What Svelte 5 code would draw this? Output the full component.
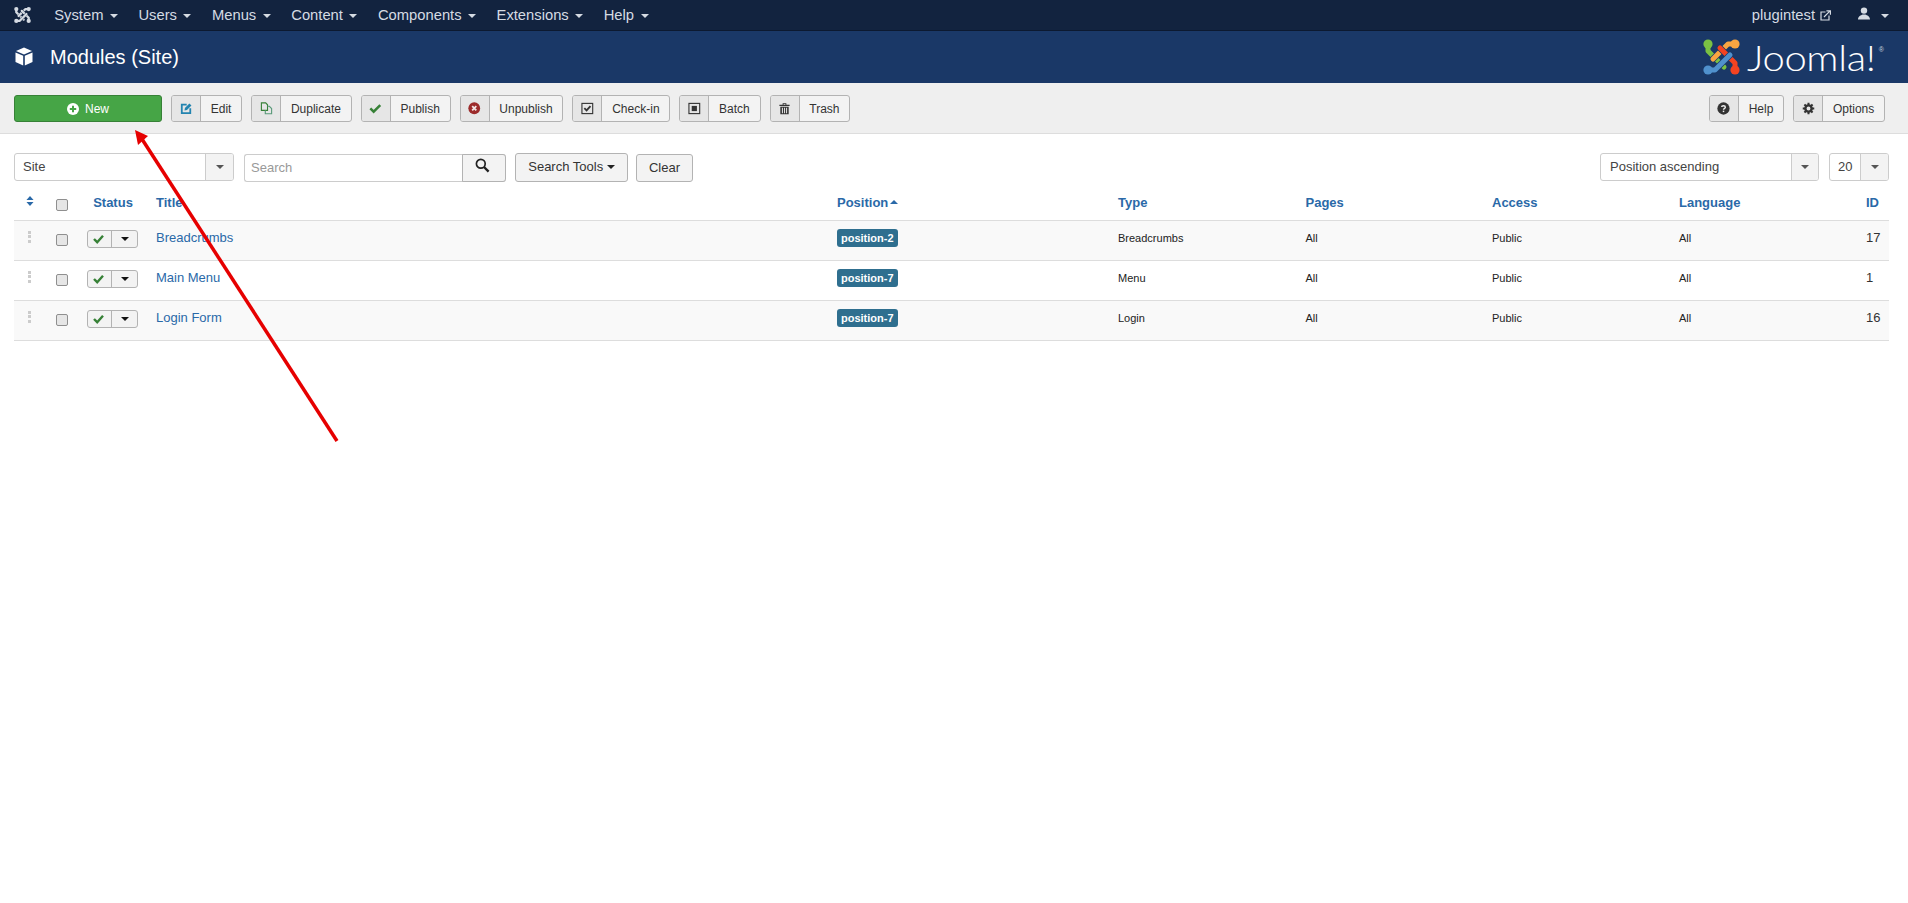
<script lang="ts">
  const menu = ["System", "Users", "Menus", "Content", "Components", "Extensions", "Help"];

  const rows = [
    { title: "Breadcrumbs", position: "position-2", type: "Breadcrumbs", id: 17 },
    { title: "Main Menu", position: "position-7", type: "Menu", id: 1 },
    { title: "Login Form", position: "position-7", type: "Login", id: 16 },
  ];

  const columns = ["Type", "Pages", "Access", "Language"];
</script>

{#snippet mark(green: string, orange: string, red: string, blue: string, gap: string)}
  <g fill="none" stroke-linejoin="round" stroke-linecap="round">
    <path d="M5 5V12L21 28" stroke={gap} stroke-width="6.4" />
    <path d="M5 5V12L21 28" stroke={green} stroke-width="5" />
    <path d="M32 5H25L10 20" stroke={gap} stroke-width="6.4" />
    <path d="M32 5H25L10 20" stroke={orange} stroke-width="5" />
    <path d="M32 31V24L17 9" stroke={gap} stroke-width="6.4" />
    <path d="M32 31V24L17 9" stroke={red} stroke-width="5" />
    <path d="M5 31H12L27 16" stroke={gap} stroke-width="6.4" />
    <path d="M5 31H12L27 16" stroke={blue} stroke-width="5" />
  </g>
  <circle cx="5" cy="5" r="4.6" fill={green} />
  <circle cx="32" cy="5" r="4.6" fill={orange} />
  <circle cx="32" cy="31" r="4.6" fill={red} />
  <circle cx="5" cy="31" r="4.6" fill={blue} />
{/snippet}

{#snippet toolButton(label: string, icon: import("svelte").Snippet)}
  <button type="button" class="tool">
    <span class="tool__icon">{@render icon()}</span>
    <span class="tool__label">{label}</span>
  </button>
{/snippet}

{#snippet iconEdit()}
  <svg width="12.5" height="12.5" viewBox="0 0 14 14">
    <path d="M7.5 3H2v9.5h9.5V7" fill="none" stroke="#2384b0" stroke-width="2" />
    <path d="M5.5 6.7 10.5 1.6 12.8 3.8 7.8 8.9 5 9.5Z" fill="#2384b0" />
  </svg>
{/snippet}
{#snippet iconCopy()}
  <svg width="13" height="13" viewBox="0 0 14 14" fill="none" stroke-width="1.2">
    <path d="M1.5 1h4.6l2 2v6H1.5Z" stroke="#378137" />
    <path d="M8.1 4.6h2l2.4 2.4v5.6H5.7V9" stroke="#5a9a7a" />
  </svg>
{/snippet}
{#snippet iconCheck()}
  <svg width="12.5" height="12.5" viewBox="0 0 14 14">
    <path d="M1.5 7.2 5.2 10.8 12.6 3.4" fill="none" stroke="#378137" stroke-width="2.8" />
  </svg>
{/snippet}
{#snippet iconCross()}
  <svg width="12.5" height="12.5" viewBox="0 0 14 14">
    <circle cx="7" cy="7" r="6.6" fill="#9c2b2b" />
    <path d="M4.7 4.7 9.3 9.3M9.3 4.7 4.7 9.3" stroke="#f3e6e6" stroke-width="2" />
  </svg>
{/snippet}
{#snippet iconCheckin()}
  <svg width="13" height="13" viewBox="0 0 14 14">
    <rect x="1" y="1.5" width="11.6" height="11" fill="none" stroke="#333" stroke-width="1.2" />
    <path d="M3.6 6.6 6 9 10.2 4.4" fill="none" stroke="#333" stroke-width="2" />
  </svg>
{/snippet}
{#snippet iconBatch()}
  <svg width="13" height="13" viewBox="0 0 14 14">
    <rect x="1" y="1.5" width="11.6" height="11" fill="none" stroke="#333" stroke-width="1.2" />
    <rect x="4" y="4.2" width="5.6" height="5.6" fill="#333" />
  </svg>
{/snippet}
{#snippet iconTrash()}
  <svg width="13" height="13" viewBox="0 0 14 14">
    <path d="M1.5 3h11v1.4h-11ZM5 3V1.4h4V3H8V2.2H6V3Z" fill="#333" />
    <path d="M2.5 5h9v8.2h-9ZM4.2 6.2v5.8h1.1V6.2ZM6.5 6.2v5.8h1.1V6.2ZM8.7 6.2v5.8h1.1V6.2Z" fill="#333" fill-rule="evenodd" />
  </svg>
{/snippet}
{#snippet iconHelp()}
  <svg width="13" height="13" viewBox="0 0 14 14">
    <circle cx="7" cy="7" r="6.6" fill="#333" />
    <path d="M5 5.5C5 3.6 9 3.5 9 5.6 9 7 7 6.8 7 8.4" fill="none" stroke="#eee" stroke-width="1.5" />
    <rect x="6.2" y="9.3" width="1.6" height="1.6" fill="#eee" />
  </svg>
{/snippet}
{#snippet iconGear()}
  <svg width="13" height="13" viewBox="0 0 14 14">
    <circle cx="7" cy="7" r="3.4" fill="none" stroke="#333" stroke-width="2.6" />
    <path d="M7 .8V13.2M.8 7H13.2M2.6 2.6l8.8 8.8M11.4 2.6l-8.8 8.8" stroke="#333" stroke-width="2.2" stroke-dasharray="2.4 7.6" />
  </svg>
{/snippet}

<div class="page">
  <nav class="topbar">
    <svg class="topbar__logo" width="17" height="18" viewBox="0 0 37 36">
      {@render mark("#d5dbe3", "#d5dbe3", "#d5dbe3", "#d5dbe3", "#12233f")}
    </svg>
    <ul class="topbar__menu">
      {#each menu as item}
        <li class="topbar__item">{item}<span class="caret"></span></li>
      {/each}
    </ul>
    <div class="topbar__right">
      <span class="topbar__site">plugintest</span>
      <svg class="topbar__ext" width="11" height="11" viewBox="0 0 11 11" fill="none" stroke="#d5dbe3" stroke-width="1.2">
        <path d="M5.5 2H1v8h8V5.5" />
        <path d="M4 7 9.6 1.4M6.4 .8h4v4" />
      </svg>
      <svg class="topbar__user" width="12" height="13" viewBox="0 0 12 13" fill="#d5dbe3">
        <circle cx="6" cy="3.6" r="3.2" />
        <path d="M0 12.5C0 9 3 8.2 4.6 7.4h2.8C9 8.2 12 9 12 12.5Z" />
      </svg>
      <span class="caret caret--user"></span>
    </div>
  </nav>

  <header class="title-bar">
    <svg class="title-bar__icon" width="18" height="19" viewBox="0 0 18 19" fill="#fff">
      <path d="M9 .5 17 4 9 7.4 1 4Z" />
      <path d="M.5 5.5 8.2 8.8V18.5L.5 15Z" />
      <path d="M17.5 5.5 9.8 8.8V18.5L17.5 15Z" />
    </svg>
    <h1 class="title-bar__text">Modules (Site)</h1>
    <div class="brand">
      <svg class="brand__mark" width="37" height="36" viewBox="0 0 37 36">
        {@render mark("#7ac143", "#f9a541", "#f44321", "#5091cd", "#1a3867")}
      </svg>
      <span class="brand__word">Joomla!</span><span class="brand__reg">®</span>
    </div>
  </header>

  <div class="toolbar">
    <button type="button" class="tool-new">
      <svg width="12" height="12" viewBox="0 0 12 12">
        <circle cx="6" cy="6" r="6" fill="#fff" />
        <path d="M6 2.8V9.2M2.8 6H9.2" stroke="#46a546" stroke-width="2" />
      </svg>
      New
    </button>
    {@render toolButton("Edit", iconEdit)}
    {@render toolButton("Duplicate", iconCopy)}
    {@render toolButton("Publish", iconCheck)}
    {@render toolButton("Unpublish", iconCross)}
    {@render toolButton("Check-in", iconCheckin)}
    {@render toolButton("Batch", iconBatch)}
    {@render toolButton("Trash", iconTrash)}
    <span class="toolbar__spacer"></span>
    {@render toolButton("Help", iconHelp)}
    {@render toolButton("Options", iconGear)}
  </div>

  <main class="content">
    <div class="filters">
      <div class="select select--site">
        <span class="select__value">Site</span>
        <span class="select__arrow"><span class="caret caret--dim"></span></span>
      </div>
      <div class="search">
        <input class="search__input" placeholder="Search" />
        <button type="button" class="search__btn" aria-label="Search">
          <svg width="15" height="15" viewBox="0 0 15 15" fill="none" stroke="#222">
            <circle cx="5.8" cy="5.8" r="4.4" stroke-width="1.7" />
            <path d="M9 9 13.6 13.6" stroke-width="2.4" />
          </svg>
        </button>
      </div>
      <button type="button" class="plain plain--tools">Search Tools <span class="caret caret--dark"></span></button>
      <button type="button" class="plain plain--clear">Clear</button>
      <span class="filters__spacer"></span>
      <div class="select select--order">
        <span class="select__value">Position ascending</span>
        <span class="select__arrow"><span class="caret caret--dim"></span></span>
      </div>
      <div class="select select--limit">
        <span class="select__value">20</span>
        <span class="select__arrow select__arrow--limit"><span class="caret caret--dim"></span></span>
      </div>
    </div>

    <table class="grid">
      <colgroup>
        <col style="width: 31px" />
        <col style="width: 33px" />
        <col style="width: 70px" />
        <col style="width: 681px" />
        <col style="width: 281px" />
        <col style="width: 187.5px" />
        <col style="width: 186.5px" />
        <col style="width: 187px" />
        <col style="width: 187px" />
        <col style="width: 31px" />
      </colgroup>
      <thead>
        <tr>
          <th class="center">
            <svg class="sort" width="8" height="10" viewBox="0 0 9 11" fill="#2a69a8">
              <path d="M4.5 0 8.5 4.4H.5ZM4.5 11 .5 6.6H8.5Z" />
            </svg>
          </th>
          <th class="center"><span class="check"></span></th>
          <th class="center">Status</th>
          <th>Title</th>
          <th>Position<span class="caret caret--up"></span></th>
          {#each columns as col}
            <th>{col}</th>
          {/each}
          <th>ID</th>
        </tr>
      </thead>
      <tbody>
        {#each rows as row}
          <tr>
            <td class="center">
              <span class="handle"><i></i><i></i><i></i></span>
            </td>
            <td class="center"><span class="check check--row"></span></td>
            <td class="status-cell">
              <span class="status">
                <span class="status__check">
                  <svg width="11" height="10" viewBox="0 0 11 10">
                    <path d="M1 5 4.2 8.2 10 1.8" fill="none" stroke="#378137" stroke-width="2.4" />
                  </svg>
                </span>
                <span class="status__more"><span class="caret caret--black"></span></span>
              </span>
            </td>
            <td><a class="link" href="#top">{row.title}</a></td>
            <td><span class="label">{row.position}</span></td>
            <td class="small">{row.type}</td>
            <td class="small">All</td>
            <td class="small">Public</td>
            <td class="small">All</td>
            <td>{row.id}</td>
          </tr>
        {/each}
      </tbody>
    </table>
  </main>

  <svg class="pointer" width="1908" height="903" viewBox="0 0 1908 903" aria-hidden="true">
    <line x1="337" y1="441" x2="140" y2="136" stroke="#e60000" stroke-width="3.5" />
    <path d="M135 130 148 136 138 145Z" fill="#e60000" />
  </svg>
</div>

<style>
  :global(body) {
    margin: 0;
    background: #fff;
  }

  .page {
    position: relative;
    min-height: 903px;
    overflow: hidden;
    font-family: "Liberation Sans", Arial, sans-serif;
    font-size: 13px;
    line-height: 18px;
    color: #333;
  }

  .caret {
    display: inline-block;
    width: 0;
    height: 0;
    margin-left: 6.5px;
    vertical-align: middle;
    border-top: 4px solid #d5dbe3;
    border-left: 4px solid transparent;
    border-right: 4px solid transparent;
  }

  .caret--user {
    margin-left: 11px;
    margin-top: 2px;
  }

  .caret--dim {
    margin: 0;
    border-top-color: #555;
  }

  .caret--dark {
    margin-left: 0;
    border-top-color: #222;
  }

  .caret--black {
    margin: 0;
    border-top-color: #111;
  }

  .caret--up {
    margin-left: 2px;
    margin-top: -3px;
    border-top: 0;
    border-bottom: 4px solid #2a69a8;
  }

  .topbar {
    display: flex;
    align-items: center;
    height: 30px;
    padding: 0 19px 0 14px;
    background: #12233f;
    border-bottom: 1px solid #0c1930;
    color: #d5dbe3;
    font-size: 14.75px;
  }

  .topbar__logo {
    margin-right: 13px;
  }

  .topbar__menu {
    display: flex;
    margin: 0;
    padding: 0;
    list-style: none;
  }

  .topbar__item {
    padding: 0 10.25px;
  }

  .topbar__right {
    display: flex;
    align-items: center;
    margin-left: auto;
  }

  .topbar__ext {
    margin-left: 5px;
  }

  .topbar__user {
    margin-left: 27px;
    margin-top: -3px;
  }

  .title-bar {
    display: flex;
    align-items: center;
    height: 52px;
    padding: 0 19px 0 15px;
    background: #1a3867;
    color: #fff;
  }

  .title-bar__icon {
    margin-top: -2px;
  }

  .title-bar__text {
    margin: 0 0 0 17px;
    font-size: 20px;
    font-weight: 400;
    line-height: 24px;
  }

  .brand {
    display: flex;
    align-items: center;
    margin-left: auto;
    margin-right: 5px;
  }

  .brand__word {
    display: inline-block;
    width: 132px;
    margin-left: 7px;
    font-family: Lato, sans-serif;
    font-size: 36px;
    font-weight: 300;
    line-height: 36px;
    letter-spacing: -0.3px;
    color: #fff;
    transform: scaleX(1.11);
    transform-origin: left center;
  }

  .brand__reg {
    align-self: flex-start;
    margin-top: 7px;
    font-size: 7px;
    line-height: 8px;
    color: #ccd3de;
  }

  .toolbar {
    display: flex;
    gap: 9px;
    height: 51px;
    padding: 12px 23px 0 14px;
    box-sizing: border-box;
    background: #efefef;
    border-bottom: 1px solid #ddd;
  }

  .tool-new {
    display: flex;
    align-items: center;
    justify-content: center;
    gap: 6px;
    box-sizing: border-box;
    width: 148px;
    height: 27px;
    padding: 0;
    border: 1px solid #378137;
    border-radius: 3px;
    background: #46a546;
    color: #fff;
    font: 12px "Liberation Sans", Arial, sans-serif;
  }

  .tool {
    display: flex;
    align-items: stretch;
    box-sizing: border-box;
    height: 27px;
    padding: 0;
    border: 1px solid #b3b3b3;
    border-radius: 3px;
    background: #f3f3f3;
    color: #333;
    font: 12px "Liberation Sans", Arial, sans-serif;
  }

  .tool__icon {
    display: flex;
    align-items: center;
    justify-content: center;
    width: 28px;
    background: #e6e6e6;
    border-right: 1px solid #b3b3b3;
    border-radius: 2px 0 0 2px;
  }

  .tool__label {
    display: flex;
    align-items: center;
    padding: 0 9.75px;
  }

  .toolbar__spacer,
  .filters__spacer {
    flex: 1;
  }

  .content {
    padding: 19px 19px 0 14px;
  }

  .filters {
    display: flex;
    align-items: flex-start;
    height: 29px;
  }

  .select {
    display: flex;
    box-sizing: border-box;
    height: 28px;
    border: 1px solid #ccc;
    border-radius: 3px;
    background: #fff;
    color: #444;
  }

  .select--site {
    width: 220px;
    margin-right: 10px;
  }

  .select--order {
    width: 219px;
    margin-right: 10px;
  }

  .select--limit {
    width: 60px;
  }

  .select__value {
    flex: 1;
    padding-left: 8px;
    line-height: 25px;
  }

  .select--order .select__value {
    padding-left: 9px;
  }

  .select__arrow {
    display: flex;
    align-items: center;
    justify-content: center;
    width: 27px;
    flex: none;
    background: #f3f3f3;
    border-left: 1px solid #ccc;
    border-radius: 0 2px 2px 0;
  }

  .select--order .select__arrow {
    width: 26px;
  }

  .search {
    display: flex;
    box-sizing: border-box;
    width: 262px;
    height: 28px;
    margin-top: 1px;
    margin-right: 9px;
    border: 1px solid #ccc;
    border-right: 0;
    border-radius: 3px;
    background: #fff;
  }

  .search__input {
    flex: 1;
    min-width: 0;
    padding: 0 6px 2px;
    border: 0;
    background: transparent;
    font: 13px "Liberation Sans", Arial, sans-serif;
    outline: none;
  }

  .search__input::placeholder {
    color: #999;
    opacity: 1;
  }

  .search__btn {
    display: flex;
    align-items: center;
    justify-content: center;
    box-sizing: content-box;
    width: 42px;
    height: 26px;
    margin: -1px 0;
    padding: 0;
    border: 1px solid #b3b3b3;
    border-radius: 0 3px 3px 0;
    background: #f3f3f3;
  }

  .search__btn svg {
    margin-top: -5px;
    margin-right: 4px;
  }

  .plain {
    box-sizing: border-box;
    height: 29px;
    padding: 0;
    border: 1px solid #b3b3b3;
    border-radius: 3px;
    background: #f3f3f3;
    color: #333;
    font: 13px "Liberation Sans", Arial, sans-serif;
  }

  .plain--tools {
    width: 113px;
    margin-right: 8px;
    padding-bottom: 3px;
  }

  .plain--clear {
    width: 57px;
    height: 28px;
    margin-top: 1px;
    padding-bottom: 2px;
  }

  .grid {
    width: 1875px;
    border-collapse: collapse;
    table-layout: fixed;
  }

  .grid th {
    padding: 4px 8px 0;
    text-align: left;
    font-weight: 700;
    color: #2a69a8;
    vertical-align: middle;
  }

  .grid thead tr {
    height: 38px;
    border-bottom: 1px solid #ddd;
  }

  .grid tbody tr {
    height: 40px;
    border-top: 1px solid #ddd;
  }

  .grid tbody tr:last-child {
    border-bottom: 1px solid #ddd;
  }

  .grid tbody tr:nth-child(odd) {
    background: #f9f9f9;
  }

  .grid td {
    padding: 8px;
    vertical-align: top;
  }

  .grid th.center,
  .grid td.center {
    padding-left: 0;
    padding-right: 0;
    text-align: center;
  }

  .grid td.small {
    font-size: 11px;
    line-height: 18px;
    color: #222;
  }

  .grid td.status-cell {
    padding: 9px 0 0 9px;
  }

  .sort {
    display: block;
    margin: -3px auto 0;
  }

  .check {
    display: block;
    box-sizing: border-box;
    width: 12px;
    height: 12px;
    margin: 4px auto 0;
    border: 1px solid #8f8f8f;
    border-radius: 2px;
    background: #e6e6e6;
  }

  .check--row {
    margin-top: 5px;
  }

  .handle {
    display: flex;
    flex-direction: column;
    align-items: center;
    gap: 1.5px;
    margin-top: 2px;
  }

  .handle i {
    display: block;
    width: 3px;
    height: 3px;
    background: #ccc;
  }

  .status {
    display: inline-flex;
    box-sizing: border-box;
    width: 51px;
    height: 18px;
    border: 1px solid #b3b3b3;
    border-radius: 3px;
    background: #f3f3f3;
  }

  .status__check {
    display: flex;
    align-items: center;
    justify-content: center;
    width: 24px;
    padding-right: 2px;
    box-sizing: border-box;
    border-right: 1px solid #b3b3b3;
  }

  .status__more {
    display: flex;
    align-items: center;
    justify-content: center;
    flex: 1;
  }

  .link {
    color: #2a69a8;
    text-decoration: none;
  }

  .label {
    display: inline-block;
    padding: 0 4px;
    border-radius: 3px;
    background: #2f6f8f;
    color: #fff;
    font-size: 11px;
    font-weight: 700;
    line-height: 18px;
    vertical-align: top;
  }

  .pointer {
    position: absolute;
    inset: 0;
    pointer-events: none;
  }
</style>
